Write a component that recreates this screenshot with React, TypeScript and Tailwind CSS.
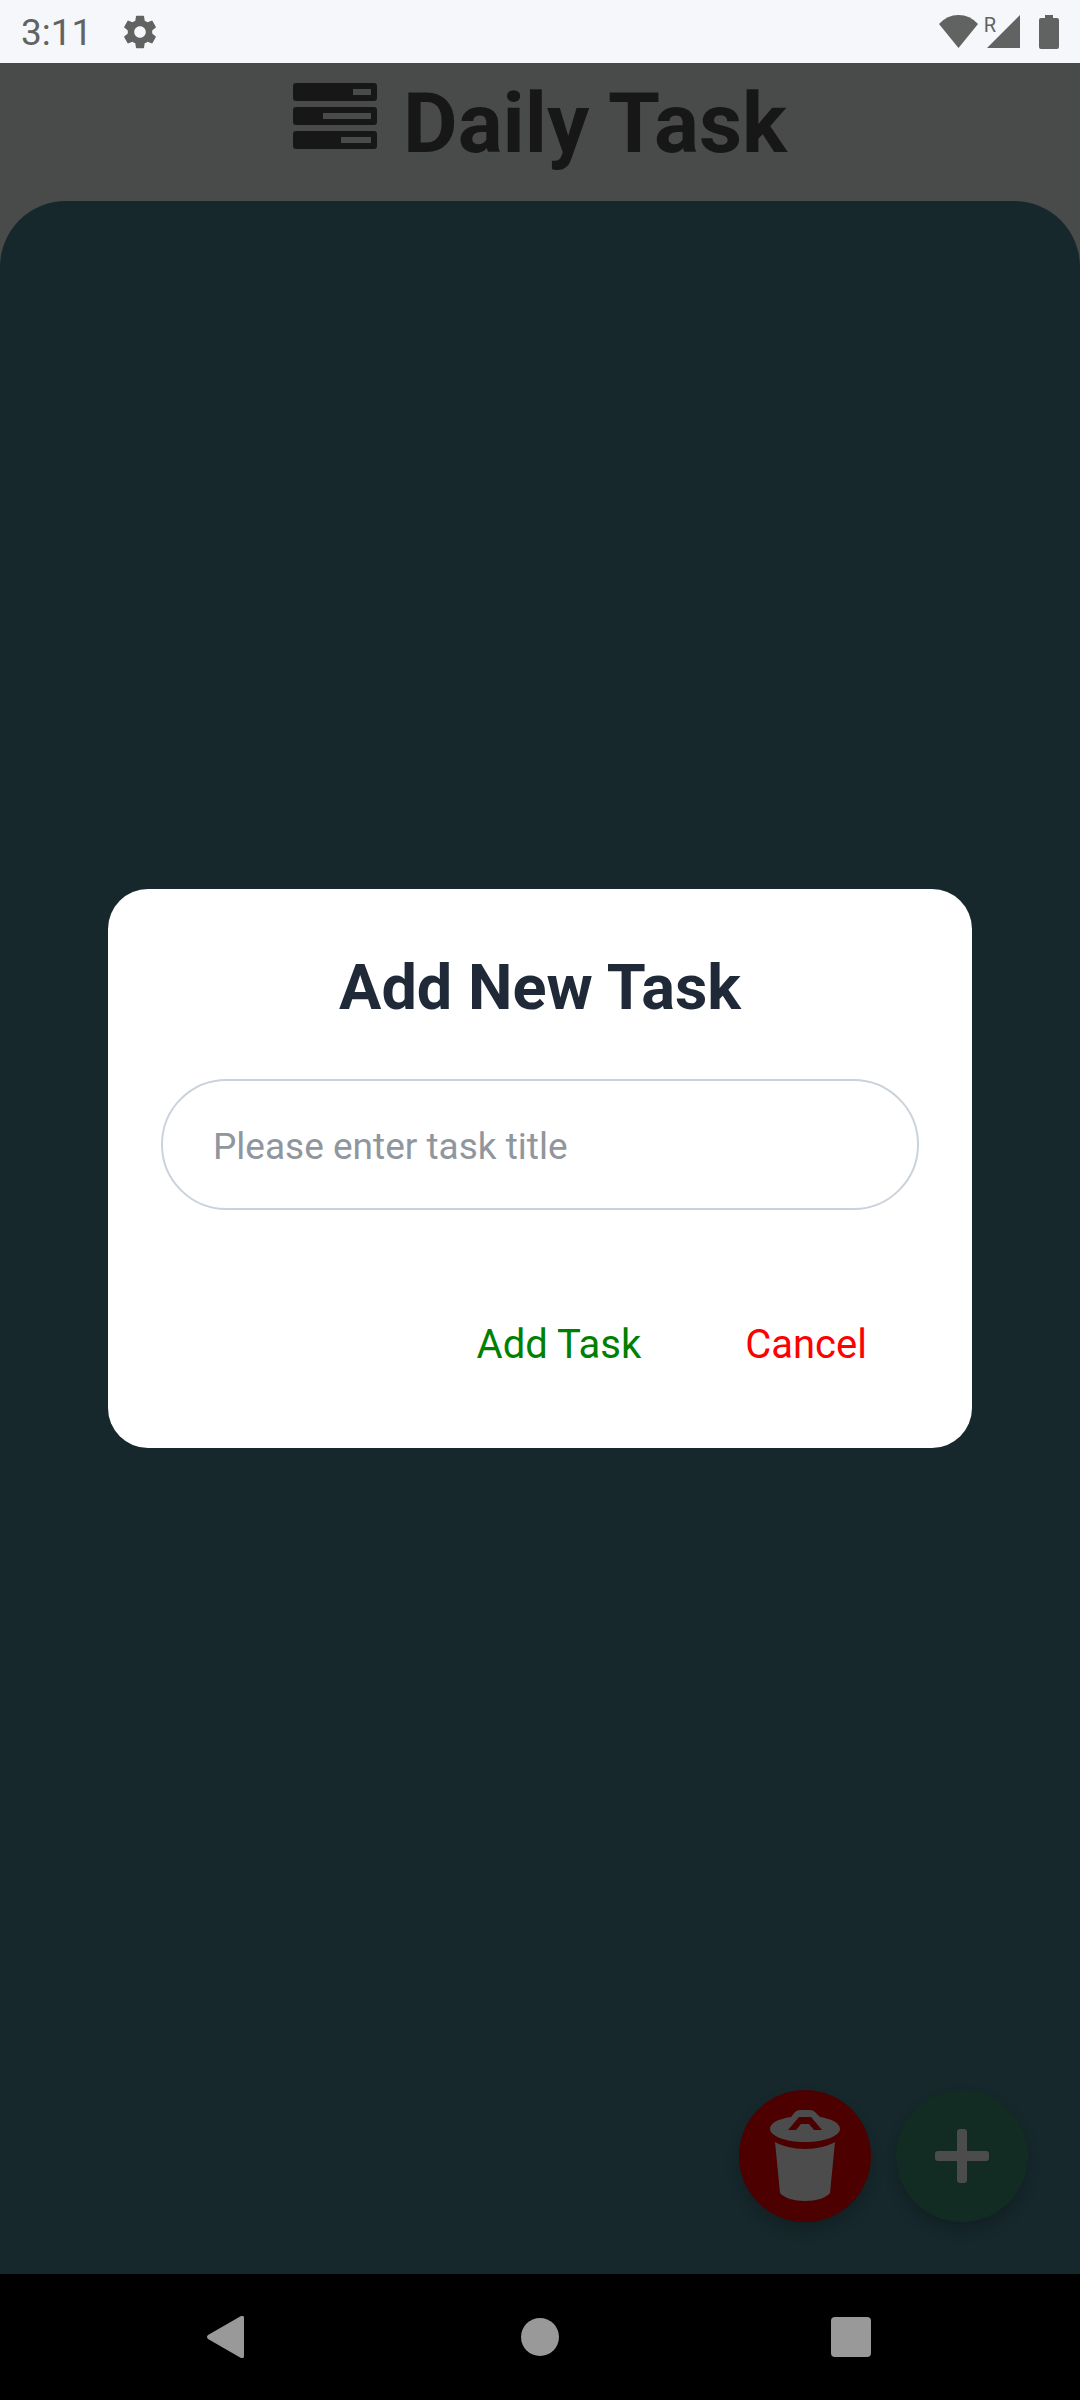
import { useState } from "react";

function StatusBar() {
  return (
    <div className="flex h-[63px] shrink-0 items-center justify-between bg-[#f5f7fa] px-[21px] text-[#616362]">
      <div className="flex items-center gap-[31px]">
        <span className="pt-[3px] text-[37px] leading-[60px]">3:11</span>
        <svg width="34" height="34" viewBox="2 2 20 20" fill="currentColor" aria-hidden="true">
          <path d="M19.14 12.94c.04-.3.06-.61.06-.94 0-.32-.02-.64-.07-.94l2.03-1.58a.49.49 0 0 0 .12-.61l-1.92-3.32a.488.488 0 0 0-.59-.22l-2.39.96c-.5-.38-1.03-.7-1.62-.94l-.36-2.54a.484.484 0 0 0-.48-.41h-3.84c-.24 0-.43.17-.47.41l-.36 2.54c-.59.24-1.13.57-1.62.94l-2.39-.96c-.22-.08-.47 0-.59.22L2.74 8.87c-.12.21-.08.47.12.61l2.03 1.58c-.05.3-.09.63-.09.94s.02.64.07.94l-2.03 1.58a.49.49 0 0 0-.12.61l1.92 3.32c.12.22.37.29.59.22l2.39-.96c.5.38 1.03.7 1.62.94l.36 2.54c.05.24.24.41.48.41h3.84c.24 0 .44-.17.47-.41l.36-2.54c.59-.24 1.13-.56 1.62-.94l2.39.96c.22.08.47 0 .59-.22l1.92-3.32c.12-.22.07-.47-.12-.61l-2.01-1.58zM12 15.4c-1.88 0-3.4-1.52-3.4-3.4s1.52-3.4 3.4-3.4 3.4 1.520 3.4 3.4-1.520 3.4-3.4 3.4z" />
        </svg>
      </div>
      <div className="flex items-center">
        <svg width="39" height="33" viewBox="0 0 39 33" fill="currentColor" aria-hidden="true">
          <path d="M0 9Q8 0 19.500 0Q31 0 39 9L19.500 33Z" />
        </svg>
        <span className="ml-[6px] self-start text-[20px] leading-[20px]">R</span>
        <svg className="-ml-[9px]" width="33" height="33" viewBox="0 0 33 33" fill="currentColor" aria-hidden="true">
          <path d="M33 0V33H0Z" />
        </svg>
        <svg className="ml-[19px]" width="20" height="34" viewBox="0 0 20 34" fill="currentColor" aria-hidden="true">
          <path d="M6 0h8v3h4a2 2 0 0 1 2 2v27a2 2 0 0 1-2 2H2a2 2 0 0 1-2-2V5a2 2 0 0 1 2-2h4z" />
        </svg>
      </div>
    </div>
  );
}

function TasksIcon() {
  return (
    <svg width="84" height="66" viewBox="0 0 84 66" aria-hidden="true">
      <g fill="#171717">
        <rect width="84" height="18" rx="3" />
        <rect y="24" width="84" height="18" rx="3" />
        <rect y="48" width="84" height="18" rx="3" />
      </g>
      <g fill="#494b4a">
        <rect x="60" y="6" width="18" height="6" />
        <rect x="30" y="30" width="48" height="6" />
        <rect x="48" y="54" width="30" height="6" />
      </g>
    </svg>
  );
}

function TrashIcon() {
  return (
    <svg width="70" height="92" viewBox="0 0 70 92" aria-hidden="true">
      <path fill="#4c4c4c" d="M21 7 25 2Q27 0 30 0H40Q43 0 45 2L50 7C62 9 70 13 70 19C70 26 54 32 35 32S0 26 0 19C0 13 8 9 21 7Z" />
      <path fill="#4c0000" d="M18 20 29 7H41L52 20H44L39 14H31L26 20Z" />
      <path fill="#4c4c4c" d="M5 32C12 36 23 39 35 39S58 36 65 32L60 83C56 88 46 91 35 91S14 88 10 83Z" />
    </svg>
  );
}

export default function App() {
  const [title, setTitle] = useState("");
  return (
    <div className="flex min-h-screen flex-col bg-[#494b4a] font-[Roboto,sans-serif]">
      <StatusBar />
      <header className="flex h-[138px] shrink-0 items-start justify-center gap-[26px] pt-[20px]">
        <TasksIcon />
        <h1 className="-mt-[10px] text-[84px] font-bold leading-[102px] text-[#171717]">Daily Task</h1>
      </header>
      <main className="relative flex flex-1 flex-col items-center justify-center rounded-t-[66px] bg-[#16282c]">
        <form
          role="dialog"
          aria-labelledby="dialog-title"
          onSubmit={(e) => e.preventDefault()}
          className="mb-[138px] flex w-4/5 flex-col rounded-[40px] bg-white px-[53px] pb-[48px] pt-[62px]"
        >
          <h2 id="dialog-title" className="text-center text-[63px] font-bold leading-[74px] text-[#1f2937]">
            Add New Task
          </h2>
          <input
            type="text"
            aria-label="Task title"
            placeholder="Please enter task title"
            value={title}
            onChange={(e) => setTitle(e.target.value)}
            className="mt-[54px] h-[131px] rounded-[66px] border-2 border-[#cbd2db] px-[50px] pt-[4px] text-[37px] text-[#1f2937] placeholder:text-[#90969d]"
          />
          <div className="mt-[80px] flex justify-end text-[40px] leading-[48px]">
            <button type="submit" className="px-[52px] py-[31px] text-[#008000]">Add Task</button>
            <button type="button" className="px-[52px] py-[31px] text-[#ff0000]">Cancel</button>
          </div>
        </form>
        <div className="absolute bottom-[52px] right-[52px] flex gap-[25px]">
          <button aria-label="Delete tasks" className="flex size-[132px] items-center justify-center rounded-full bg-[#4c0000] shadow-[0_8px_14px_rgba(0,0,0,0.2)]">
            <TrashIcon />
          </button>
          <button aria-label="Add task" className="flex size-[132px] items-center justify-center rounded-full bg-[#122c23] shadow-[0_8px_14px_rgba(0,0,0,0.2)]">
            <svg width="54" height="54" viewBox="0 0 54 54" fill="#4c4c4c" aria-hidden="true">
              <rect x="22" width="10" height="54" rx="3" />
              <rect y="22" width="54" height="10" rx="3" />
            </svg>
          </button>
        </div>
      </main>
      <nav className="flex h-[126px] shrink-0 items-center justify-between bg-black pl-[207px] pr-[209px] text-[#999999]">
        <button aria-label="Back">
          <svg width="42" height="42" viewBox="2 0 42 42" fill="currentColor" aria-hidden="true">
            <path d="M3 19 36 0Q39 -1 39 2V40Q39 43 36 42L3 23Q1 21 3 19Z" />
          </svg>
        </button>
        <button aria-label="Home" className="size-[38px] rounded-full bg-[#999999]" />
        <button aria-label="Recent apps" className="size-[40px] rounded-[4px] bg-[#999999]" />
      </nav>
    </div>
  );
}
